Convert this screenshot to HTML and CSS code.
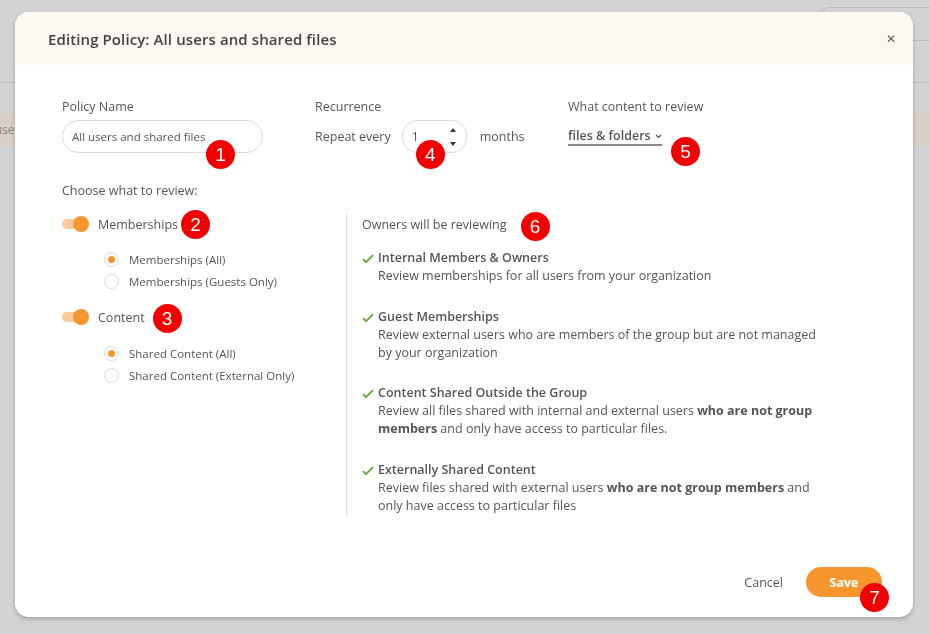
FILE: index.html
```html
<!DOCTYPE html>
<html>
<head>
<meta charset="utf-8">
<link rel="stylesheet" href="styles.css">
</head>
<body>
<div class="page">
  <div class="page-top">
    <div class="page-search"></div>
  </div>
  <div class="page-row"><span class="page-cell">All use</span></div>
</div>

<div class="modal">
  <header class="modal-header">
    <h2 class="modal-title">Editing Policy: All users and shared files</h2>
    <span class="close">&#x2715;</span>
  </header>

  <div class="modal-body">
    <div class="top-row">
      <div class="field">
        <div class="label">Policy Name</div>
        <div class="anchor">
          <div class="text-input">All users and shared files</div>
          <span class="badge b1">1</span>
        </div>
      </div>
      <div class="field">
        <div class="label">Recurrence</div>
        <div class="repeat">
          <span>Repeat every</span>
          <div class="anchor">
            <div class="spin">
              <span>1</span>
              <span class="arrows"><span class="up"></span><span class="down"></span></span>
            </div>
            <span class="badge b4">4</span>
          </div>
          <span class="months">months</span>
        </div>
      </div>
      <div class="field">
        <div class="label">What content to review</div>
        <div class="anchor">
          <div class="select">files &amp; folders <svg class="chev" width="7" height="5" viewBox="0 0 7 5"><path d="M1 1l2.5 2.5L6 1" fill="none" stroke="#555" stroke-width="1.2"/></svg></div>
          <span class="badge b5">5</span>
        </div>
      </div>
    </div>

    <div class="choose">Choose what to review:</div>

    <div class="columns">
      <div class="left">
        <div class="toggle-row">
          <span class="toggle"><span class="knob"></span></span>
          <span class="anchor">Memberships<span class="badge b2">2</span></span>
        </div>
        <div class="radios">
          <div class="radio-row"><span class="radio on"></span>Memberships (All)</div>
          <div class="radio-row"><span class="radio"></span>Memberships (Guests Only)</div>
        </div>
        <div class="toggle-row">
          <span class="toggle"><span class="knob"></span></span>
          <span class="anchor">Content<span class="badge b3">3</span></span>
        </div>
        <div class="radios second">
          <div class="radio-row"><span class="radio on"></span>Shared Content (All)</div>
          <div class="radio-row"><span class="radio"></span>Shared Content (External Only)</div>
        </div>
      </div>

      <div class="right">
        <div class="owners"><span class="anchor">Owners will be reviewing<span class="badge b6">6</span></span></div>
        <div class="item">
          <svg class="check" width="12" height="10" viewBox="0 0 12 10"><path d="M1 5.2l3 3L11 1.2" fill="none" stroke="#64a83c" stroke-width="1.8"/></svg>
          <div>
            <div class="item-title">Internal Members &amp; Owners</div>
            <div class="item-desc">Review memberships for all users from your organization</div>
          </div>
        </div>
        <div class="item">
          <svg class="check" width="12" height="10" viewBox="0 0 12 10"><path d="M1 5.2l3 3L11 1.2" fill="none" stroke="#64a83c" stroke-width="1.8"/></svg>
          <div>
            <div class="item-title">Guest Memberships</div>
            <div class="item-desc">Review external users who are members of the group but are not managed by your organization</div>
          </div>
        </div>
        <div class="item">
          <svg class="check" width="12" height="10" viewBox="0 0 12 10"><path d="M1 5.2l3 3L11 1.2" fill="none" stroke="#64a83c" stroke-width="1.8"/></svg>
          <div>
            <div class="item-title">Content Shared Outside the Group</div>
            <div class="item-desc">Review all files shared with internal and external users <b>who are not group members</b> and only have access to particular files.</div>
          </div>
        </div>
        <div class="item">
          <svg class="check" width="12" height="10" viewBox="0 0 12 10"><path d="M1 5.2l3 3L11 1.2" fill="none" stroke="#64a83c" stroke-width="1.8"/></svg>
          <div>
            <div class="item-title">Externally Shared Content</div>
            <div class="item-desc">Review files shared with external users <b>who are not group members</b> and only have access to particular files</div>
          </div>
        </div>
      </div>
    </div>
  </div>

  <footer class="modal-footer">
    <span class="cancel">Cancel</span>
    <span class="anchor">
      <span class="save">Save</span>
      <span class="badge b7">7</span>
    </span>
  </footer>
</div>
</body>
</html>
```

FILE: styles.css
```css
* { box-sizing: border-box; }

html, body {
  margin: 0;
  height: 100%;
}

body {
  background: #d3d3d3;
  font-family: "Open Sans", "Liberation Sans", sans-serif;
  color: #555;
  overflow: hidden;
}

/* dimmed page underneath */
.page-top {
  height: 83px;
  border-bottom: 1px solid #bcbcbc;
  position: relative;
}
.page-search {
  position: absolute;
  left: 814px;
  top: 7px;
  right: -20px;
  height: 34px;
  border: 1px solid #bcbcbc;
  border-radius: 17px 0 0 0;
  border-right: none;
}
.page-row {
  margin-top: 30px;
  height: 33px;
  background: #d9cfc8;
  display: flex;
  align-items: center;
}
.page-cell {
  font-size: 12px;
  color: #888;
  margin-left: -22px;
}

/* modal */
.modal {
  position: fixed;
  left: 15px;
  top: 12px;
  width: 898px;
  height: 605px;
  background: #fff;
  border-radius: 14px;
  box-shadow: 0 2px 4px rgba(0,0,0,0.22);
  display: flex;
  flex-direction: column;
  overflow: visible;
}

.modal-header {
  height: 53px;
  background: #fdf8f2;
  border-radius: 14px 14px 0 0;
  display: flex;
  align-items: center;
  justify-content: space-between;
  padding: 0 17px 0 33px;
}
.modal-title {
  margin: 0;
  font-size: 15px;
  font-weight: 600;
  color: #444;
  letter-spacing: 0.1px;
}
.close {
  font-size: 12px;
  color: #555;
}

.modal-body {
  flex: 1;
  padding: 34px 0 0 47px;
}

.top-row {
  display: grid;
  grid-template-columns: 253px 253px 253px;
}
.label {
  font-size: 12.5px;
  line-height: 16px;
  color: #555;
  margin-bottom: 5px;
}
.anchor {
  position: relative;
  display: inline-flex;
  align-items: center;
}
.text-input {
  width: 201px;
  height: 33px;
  border: 1px solid #dcdcdc;
  border-radius: 17px;
  font-size: 11.5px;
  color: #555;
  display: flex;
  align-items: center;
  padding-left: 9px;
}

.repeat {
  display: flex;
  align-items: center;
  font-size: 12.5px;
}
.repeat > span:first-child {
  margin-right: 11px;
}
.spin {
  width: 65px;
  height: 33px;
  border: 1px solid #dcdcdc;
  border-radius: 15px;
  display: flex;
  align-items: center;
  justify-content: space-between;
  padding: 0 10px 0 9px;
  font-size: 12px;
}
.arrows {
  display: flex;
  flex-direction: column;
  gap: 10px;
}
.up, .down {
  width: 0;
  height: 0;
  border-left: 3.5px solid transparent;
  border-right: 3.5px solid transparent;
}
.up { border-bottom: 4px solid #333; }
.down { border-top: 4px solid #333; }
.months { margin-left: 13px; }

.select {
  height: 31px;
  display: flex;
  align-items: center;
  gap: 4px;
  font-size: 12.5px;
  font-weight: 600;
  color: #555;
  position: relative;
}
.select::after {
  content: "";
  position: absolute;
  left: 0;
  right: 0;
  bottom: 5px;
  height: 2px;
  background: #8c8c8c;
}
.chev { margin-top: 1px; }

.choose {
  margin-top: 30px;
  font-size: 12.5px;
  line-height: 16px;
}

.columns {
  display: flex;
  margin-top: 15px;
}
.left {
  width: 284px;
  flex: none;
}
.toggle-row {
  display: flex;
  align-items: center;
  height: 20px;
  font-size: 12.5px;
}
.toggle {
  position: relative;
  width: 26px;
  height: 10px;
  border-radius: 5px;
  background: #fbcb9b;
  margin-right: 10px;
}
.knob {
  position: absolute;
  right: -1px;
  top: -3px;
  width: 16px;
  height: 16px;
  border-radius: 50%;
  background: #f7962e;
}
.radios {
  padding-left: 42px;
  margin-top: 15px;
  margin-bottom: 15px;
}
.radios.second {
  margin-top: 16px;
}
.radio-row {
  display: flex;
  align-items: center;
  height: 21.5px;
  font-size: 11.5px;
}
.radio {
  width: 15px;
  height: 15px;
  border: 1px solid #d9d9d9;
  border-radius: 50%;
  margin-right: 10px;
  display: inline-flex;
  align-items: center;
  justify-content: center;
}
.radio.on::after {
  content: "";
  width: 7px;
  height: 7px;
  border-radius: 50%;
  background: #f7962e;
}

.right {
  border-left: 1px solid #dcdcdc;
  padding-left: 15px;
  width: 480px;
  margin-top: 0;
  margin-bottom: 3px;
}
.owners {
  font-size: 12.5px;
  height: 20px;
  display: flex;
  align-items: center;
  margin-bottom: 15px;
}
.item {
  display: flex;
  gap: 4px;
  margin-bottom: 22.5px;
}
.item:last-child { margin-bottom: 0; }
.check {
  flex: none;
  margin-top: 5px;
}
.item-title {
  font-size: 12.5px;
  font-weight: 600;
  line-height: 18px;
}
.item-desc {
  font-size: 12.5px;
  line-height: 18px;
  width: 450px;
}
.item-desc b { font-weight: 700; }

.modal-footer {
  display: flex;
  justify-content: flex-end;
  align-items: center;
  padding: 0 31px 20px 0;
}
.cancel {
  font-size: 12.5px;
  margin-right: 23px;
}
.save {
  width: 76px;
  height: 30px;
  border-radius: 15px;
  background: #f7962e;
  color: #fff;
  font-weight: 700;
  font-size: 12.5px;
  display: flex;
  align-items: center;
  justify-content: center;
}

/* annotation badges */
.badge {
  position: absolute;
  width: 29px;
  height: 29px;
  border-radius: 50%;
  background: #f20000;
  color: #fff;
  font-family: "Liberation Sans", Arial, sans-serif;
  font-size: 19px;
  line-height: 29px;
  text-align: center;
}
.b1 { left: 144px; top: 20px; }
.b4 { left: 14px; top: 20px; }
.b5 { left: 103px; top: 17px; }
.b2 { right: -32px; top: -6px; }
.b3 { right: -37px; top: -5px; }
.b6 { right: -43px; top: -4px; }
.b7 { left: 54px; top: 16px; }
```
